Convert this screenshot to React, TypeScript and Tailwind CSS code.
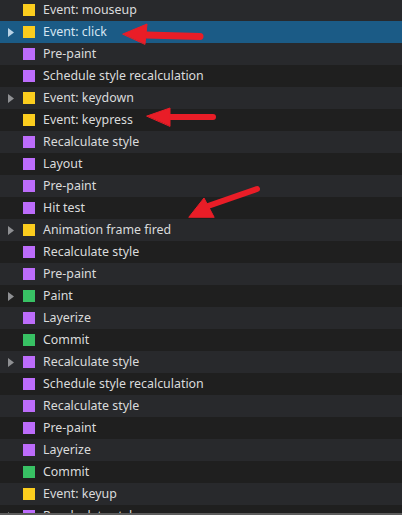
import React from "react";

type Kind = "event" | "render" | "paint";

type Row = { label: string; kind: Kind; expandable?: boolean };

const rows: Row[] = [
  { label: "Event: mouseup", kind: "event" },
  { label: "Event: click", kind: "event", expandable: true },
  { label: "Pre-paint", kind: "render" },
  { label: "Schedule style recalculation", kind: "render" },
  { label: "Event: keydown", kind: "event", expandable: true },
  { label: "Event: keypress", kind: "event" },
  { label: "Recalculate style", kind: "render" },
  { label: "Layout", kind: "render" },
  { label: "Pre-paint", kind: "render" },
  { label: "Hit test", kind: "render" },
  { label: "Animation frame fired", kind: "event", expandable: true },
  { label: "Recalculate style", kind: "render" },
  { label: "Pre-paint", kind: "render" },
  { label: "Paint", kind: "paint", expandable: true },
  { label: "Layerize", kind: "render" },
  { label: "Commit", kind: "paint" },
  { label: "Recalculate style", kind: "render", expandable: true },
  { label: "Schedule style recalculation", kind: "render" },
  { label: "Recalculate style", kind: "render" },
  { label: "Pre-paint", kind: "render" },
  { label: "Layerize", kind: "render" },
  { label: "Commit", kind: "paint" },
  { label: "Event: keyup", kind: "event" },
  { label: "Recalculate style", kind: "render", expandable: true },
];

const swatch: Record<Kind, string> = {
  event: "bg-[#fbcd1e]",
  render: "bg-[#bc6cfb]",
  paint: "bg-[#38c164]",
};

const SELECTED = 1;

function TreeRow({ row, index }: { row: Row; index: number }) {
  const selected = index === SELECTED;
  const bg = selected
    ? "bg-[#1b5b86]"
    : index % 2 === 0
      ? "bg-[#28292c]"
      : "bg-[#1f1f1f]";

  return (
    <div className={`h-[22px] flex items-center shrink-0 ${bg}`}>
      <div className="w-[23px] flex items-center pl-[8px]">
        {row.expandable && (
          <svg width="6" height="9" viewBox="0 0 6 9">
            <path
              d="M0 0 L6 4.5 L0 9 Z"
              fill={selected ? "#b9d3e6" : "#8f9093"}
            />
          </svg>
        )}
      </div>
      <span className={`w-3 h-3 shrink-0 ${swatch[row.kind]}`} />
      <span
        className={`ml-[8px] pt-px text-[12.4px] leading-none whitespace-nowrap ${
          selected ? "text-[#d6e6f2]" : "text-[#dadbdc]"
        }`}
      >
        {row.label}
      </span>
    </div>
  );
}

// Red annotation arrows drawn over the list
function Arrows() {
  return (
    <svg
      className="absolute inset-0 pointer-events-none"
      width="402"
      height="515"
      viewBox="0 0 402 515"
    >
      <g fill="#e91d27" stroke="#e91d27" strokeLinecap="round">
        <line x1="146" y1="35" x2="200" y2="36.5" strokeWidth="7" />
        <polygon points="123,34 147,24 145,44" strokeWidth="1" strokeLinejoin="round" />

        <line x1="168" y1="117" x2="213" y2="117" strokeWidth="6" />
        <polygon points="147,116 170,108 170,126" strokeWidth="1" strokeLinejoin="round" />

        <line x1="208" y1="206" x2="257" y2="189" strokeWidth="6" />
        <polygon points="189,217 204,198 214,217" strokeWidth="1" strokeLinejoin="round" />
      </g>
    </svg>
  );
}

export default function App() {
  return (
    <div
      className="relative w-[402px] h-[515px] overflow-hidden bg-[#1f1f1f] border-b-2 border-[#5c5c5c]"
      style={{ fontFamily: '"Noto Sans", "Open Sans", sans-serif' }}
    >
      <div className="flex flex-col -mt-px">
        {rows.map((row, i) => (
          <TreeRow key={i} row={row} index={i} />
        ))}
      </div>
      <Arrows />
    </div>
  );
}
